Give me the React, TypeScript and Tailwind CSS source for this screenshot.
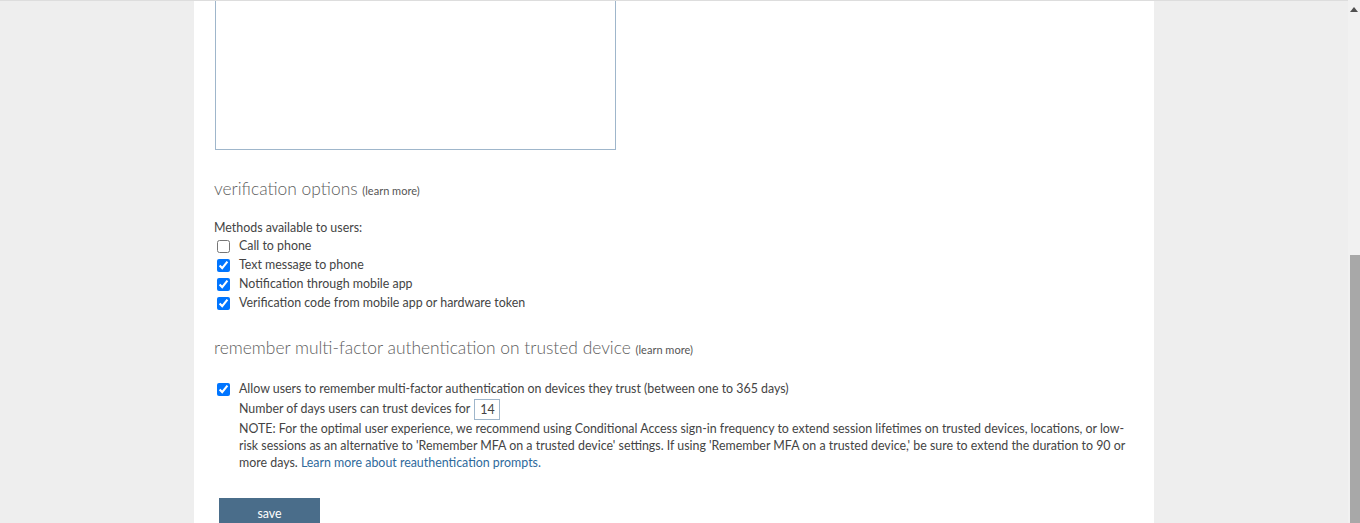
import React from "react";

const methods = [
  { label: "Call to phone", checked: false },
  { label: "Text message to phone", checked: true },
  { label: "Notification through mobile app", checked: true },
  { label: "Verification code from mobile app or hardware token", checked: true },
];

function SectionTitle({ children }: { children: React.ReactNode }) {
  return (
    <h2 className="text-[17.4px] leading-[24px] font-light text-[#606060]">
      {children}{" "}
      <a className="text-[11px] font-normal text-[#555555] cursor-pointer">(learn more)</a>
    </h2>
  );
}

function Check({ checked, label }: { checked: boolean; label: string }) {
  return (
    <label className="flex items-center h-[19px]">
      <input type="checkbox" defaultChecked={checked} className="m-0 ml-[3px] mr-[9px] w-[13px] h-[13px]" />
      <span>{label}</span>
    </label>
  );
}

export default function App() {
  return (
    <div className="flex h-[523px] overflow-hidden bg-[#eeeeee] font-['Lato','Liberation_Sans',sans-serif] text-[12.4px] text-[#444444]">
      <div className="flex-1 border-t border-[#dddddd] overflow-hidden">
        <div className="mx-auto w-[960px] h-full bg-white px-5">
          {/* phone text box, scrolled past its top */}
          <div className="ml-px w-[401px] h-[149px] border-x border-b border-[#9fb6cb]" />

          <div className="mt-[27px]">
            <SectionTitle>verification options</SectionTitle>
          </div>

          <div className="mt-[16px] leading-[18px]">Methods available to users:</div>
          {methods.map((m) => (
            <Check key={m.label} checked={m.checked} label={m.label} />
          ))}

          <div className="mt-[23px]">
            <SectionTitle>remember multi-factor authentication on trusted device</SectionTitle>
          </div>

          <div className="mt-[18px]">
            <Check checked label="Allow users to remember multi-factor authentication on devices they trust (between one to 365 days)" />
            <div className="pl-[25px]">
              <div className="flex items-center h-[21px]">
                <span>Number of days users can trust devices for</span>
                <input
                  defaultValue="14"
                  className="ml-[4px] w-[26px] h-[21px] border border-[#9fb6cb] text-center text-[12.4px] text-[#444444] outline-none"
                />
              </div>
              <p className="leading-[17px] whitespace-nowrap">
                NOTE: For the optimal user experience, we recommend using Conditional Access sign-in frequency to extend session lifetimes on trusted devices, locations, or low-
                <br />
                risk sessions as an alternative to 'Remember MFA on a trusted device' settings. If using 'Remember MFA on a trusted device,' be sure to extend the duration to 90 or
                <br />
                more days. <a className="text-[#2f6a9c] cursor-pointer">Learn more about reauthentication prompts.</a>
              </p>
            </div>
          </div>

          <button className="mt-[27px] ml-[5px] w-[101px] h-[32px] bg-[#4a6d8a] text-white text-[12.4px] leading-[32px] text-center">
            save
          </button>
        </div>
      </div>

      {/* browser scrollbar */}
      <div className="w-3 flex flex-col bg-[#f1f1f1]">
        <div className="h-[255px] flex justify-center pt-[7px]">
          <svg width="8" height="5" viewBox="0 0 8 5">
            <path d="M0 5 L4 0 L8 5 Z" fill="#505050" />
          </svg>
        </div>
        <div className="flex-1 ml-[2px] bg-[#a8a8a8]" />
      </div>
    </div>
  );
}
